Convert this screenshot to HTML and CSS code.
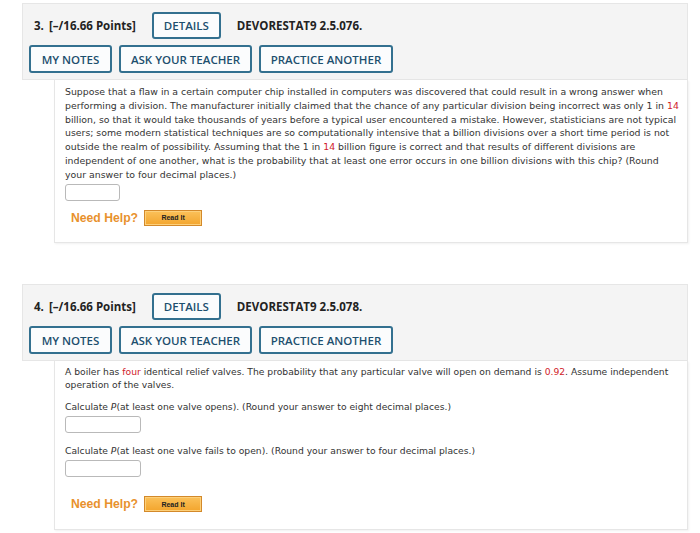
FILE: index.html
```html
<!DOCTYPE html>
<html>
<head>
<meta charset="utf-8">
<link rel="stylesheet" href="styles.css">
</head>
<body>
<div class="page">
  <section class="question">
    <div class="qhead">
      <div class="row1">
        <span class="qnum">3.</span>
        <span class="points">[–/16.66 Points]</span>
        <button class="btn btn-details">DETAILS</button>
        <span class="qid">DEVORESTAT9 2.5.076.</span>
      </div>
      <div class="row2">
        <button class="btn btn-notes">MY NOTES</button>
        <button class="btn btn-ask">ASK YOUR TEACHER</button>
        <button class="btn btn-practice">PRACTICE ANOTHER</button>
      </div>
    </div>
    <div class="qbody q3body">
      <p class="text">Suppose that a flaw in a certain computer chip installed in computers was discovered that could result in a wrong answer when performing a division. The manufacturer initially claimed that the chance of any particular division being incorrect was only 1 in <span class="red">14</span> billion, so that it would take thousands of years before a typical user encountered a mistake. However, statisticians are not typical users; some modern statistical techniques are so computationally intensive that a billion divisions over a short time period is not outside the realm of possibility. Assuming that the 1 in <span class="red">14</span> billion figure is correct and that results of different divisions are independent of one another, what is the probability that at least one error occurs in one billion divisions with this chip? (Round your answer to four decimal places.)</p>
      <div class="answer short"></div>
      <div class="help">
        <span class="needhelp">Need Help?</span>
        <span class="readit">Read It</span>
      </div>
    </div>
  </section>

  <section class="question q4">
    <div class="qhead">
      <div class="row1">
        <span class="qnum">4.</span>
        <span class="points">[–/16.66 Points]</span>
        <button class="btn btn-details">DETAILS</button>
        <span class="qid">DEVORESTAT9 2.5.078.</span>
      </div>
      <div class="row2">
        <button class="btn btn-notes">MY NOTES</button>
        <button class="btn btn-ask">ASK YOUR TEACHER</button>
        <button class="btn btn-practice">PRACTICE ANOTHER</button>
      </div>
    </div>
    <div class="qbody q4body">
      <p class="text">A boiler has <span class="red">four</span> identical relief valves. The probability that any particular valve will open on demand is <span class="red">0.92</span>. Assume independent operation of the valves.</p>
      <p class="text part">Calculate <i>P</i>(at least one valve opens). (Round your answer to eight decimal places.)</p>
      <div class="answer long"></div>
      <p class="text part part2">Calculate <i>P</i>(at least one valve fails to open). (Round your answer to four decimal places.)</p>
      <div class="answer long"></div>
      <div class="help help4">
        <span class="needhelp">Need Help?</span>
        <span class="readit">Read It</span>
      </div>
    </div>
  </section>
</div>
</body>
</html>
```
FILE: styles.css
```css
* { box-sizing: border-box; }
html, body { margin: 0; padding: 0; background: #ffffff; }
body { width: 700px; height: 533px; overflow: hidden; }

.page {
  padding: 3px 12px 0 22px;
  display: flex;
  flex-direction: column;
  gap: 41px;
}

.question { width: 666px; display: flex; flex-direction: column; }

.qhead {
  background: #f4f4f4;
  border: 1px solid #e6e6e6;
  height: 77px;
  padding: 8px 0 0 6px;
  display: flex;
  flex-direction: column;
  gap: 6px;
  font-family: "Open Sans", sans-serif;
  color: #222;
}

.row1 { display: flex; align-items: center; height: 27px; }
.row2 { display: flex; gap: 7px; height: 28px; }

.qnum { font-weight: 700; font-size: 11.5px; margin-left: 5px; width: 15px; }
.points { font-weight: 700; font-size: 11.5px; margin-right: 16px; }
.qid { font-weight: 700; font-size: 11.5px; margin-left: 16px; color: #222; }

.btn {
  font-family: "Open Sans", sans-serif;
  font-weight: 600;
  font-size: 11.5px;
  color: #1d4f6e;
  background: #fbfcfd;
  border: 2px solid #33708f;
  border-radius: 3px;
  padding: 0;
  height: 27px;
  display: flex;
  align-items: center;
  justify-content: center;
}
.btn-details { width: 69px; }
.btn-notes { width: 83px; height: 28px; }
.btn-ask { width: 133px; height: 28px; }
.btn-practice { width: 134px; height: 28px; }

.qbody {
  margin-left: 32px;
  border: 1px solid #e6e6e6;
  border-top: none;
  box-shadow: 1px 1px 2px rgba(0,0,0,0.06);
  padding: 5px 7px 0 10px;
  font-family: "DejaVu Sans", Verdana, sans-serif;
  font-size: 9.35px;
  color: #333;
}
.q3body { height: 163px; }
.q4body { height: 169px; padding-top: 4px; padding-right: 10px; font-size: 9.2px; }

.text { margin: 0; line-height: 13.8px; }
.q4body .text { line-height: 13px; }
.red { color: #d0212a; }
.part { margin-top: 9px; }
.part2 { margin-top: 11px; }

.answer {
  border: 1px solid #b9b9b9;
  border-radius: 3px;
  height: 17px;
  background: #fff;
}
.answer.short { width: 55px; margin-top: 2px; }
.answer.long { width: 76px; margin-top: 3px; height: 17px; }

.help {
  display: flex;
  align-items: center;
  gap: 6px;
  margin-top: 9px;
  margin-left: 6px;
}
.help4 { margin-top: 19px; }
.needhelp {
  font-family: "Liberation Sans", Arial, sans-serif;
  font-weight: 700;
  font-size: 12.2px;
  color: #e8912d;
}
.readit {
  width: 58px;
  height: 16px;
  background: linear-gradient(#fbc15a, #f3a52d);
  border: 1px solid #d3892a;
  box-shadow: inset 0 0 0 1px #fdd07a;
  font-family: "Liberation Sans", Arial, sans-serif;
  font-weight: 700;
  font-size: 7px;
  color: #222;
  display: flex;
  align-items: center;
  justify-content: center;
}
```
